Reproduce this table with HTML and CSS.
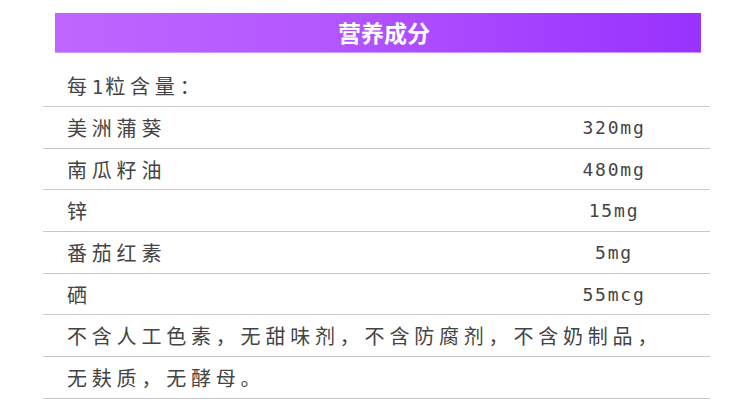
FILE: index.html
```html
<!DOCTYPE html>
<html lang="zh">
<head>
<meta charset="utf-8">
<link rel="stylesheet" href="styles.css">
</head>
<body>
<div class="page">
  <div class="title-bar"><span class="title">营养成分</span></div>
  <div class="table">
    <div class="row row-head"><span class="name">每<span class="digit">1</span>粒含量：</span></div>
    <div class="row"><span class="name">美洲蒲葵</span><span class="val">320mg</span></div>
    <div class="row"><span class="name">南瓜籽油</span><span class="val">480mg</span></div>
    <div class="row"><span class="name">锌</span><span class="val">15mg</span></div>
    <div class="row"><span class="name">番茄红素</span><span class="val">5mg</span></div>
    <div class="row"><span class="name">硒</span><span class="val">55mcg</span></div>
    <div class="row"><span class="name">不含人工色素，无甜味剂，不含防腐剂，不含奶制品，</span></div>
    <div class="row"><span class="name">无麸质，无酵母。</span></div>
  </div>
</div>
</body>
</html>
```

FILE: styles.css
```css
html, body {
  margin: 0;
  padding: 0;
  background: #ffffff;
}
.page {
  width: 750px;
  height: 420px;
  padding-top: 13px;
  box-sizing: border-box;
  font-family: "Noto Sans CJK SC", "Noto Sans", sans-serif;
}
.title-bar {
  margin-left: 55px;
  width: 646px;
  height: 39px;
  background: linear-gradient(90deg, #bf66ff 0%, #b458ff 40%, #a23cff 80%, #9a32ff 100%);
  border-bottom: 1px solid #cf95ff;
  display: flex;
  align-items: center;
  justify-content: center;
}
.title {
  color: #ffffff;
  font-weight: bold;
  font-size: 23px;
  line-height: 1;
  padding-left: 12px;
}
.table {
  margin-left: 43px;
  width: 667px;
  margin-top: 12px;
}
.row {
  display: flex;
  align-items: center;
  height: 40.7px;
  border-bottom: 1px solid #c8c8c8;
  color: #444444;
  font-size: 20px;
}
.row-head {
  height: 41px;
}
.name {
  flex: 1;
  padding-left: 24px;
  letter-spacing: 4.8px;
  white-space: nowrap;
}
.digit {
  font-family: "DejaVu Sans Mono", monospace;
  font-size: 19px;
  letter-spacing: 2px;
}
.val {
  width: 196px;
  text-align: center;
  font-family: "DejaVu Sans Mono", monospace;
  letter-spacing: 1.8px;
  font-size: 18px;
  padding-left: 4px;
  box-sizing: border-box;
}
```
